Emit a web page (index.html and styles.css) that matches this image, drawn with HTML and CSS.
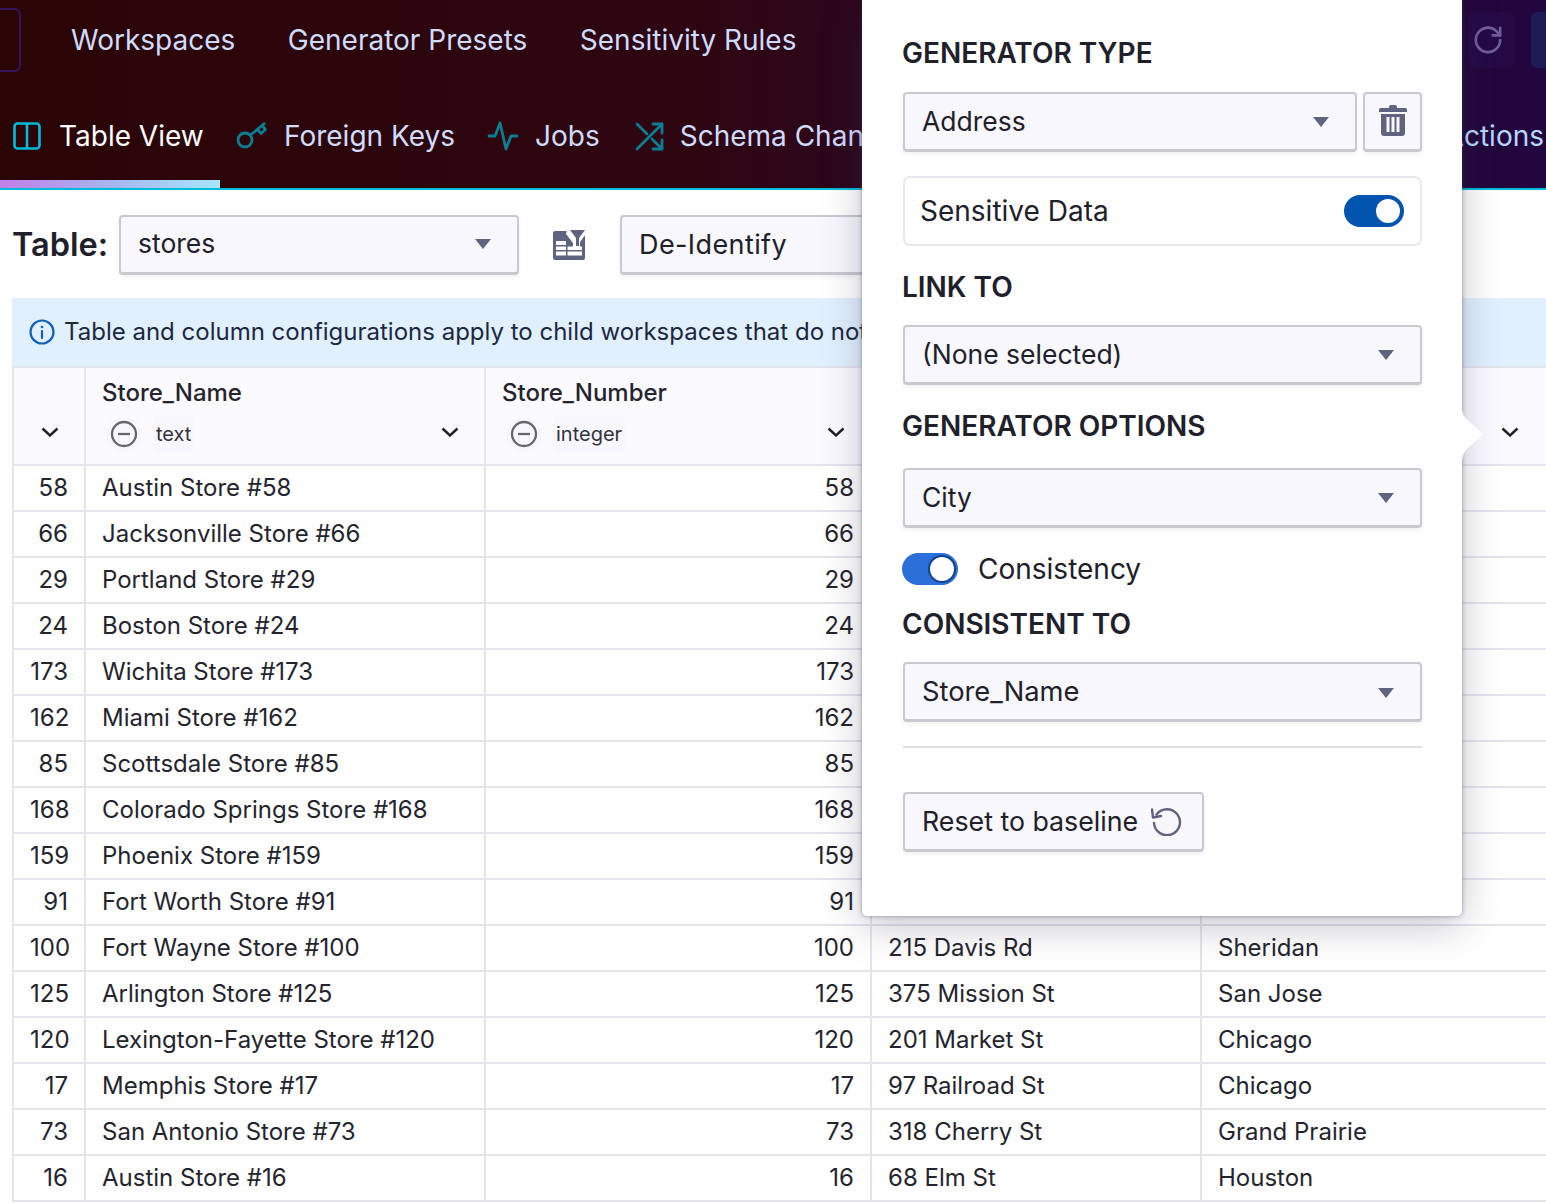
FILE: index.html
```html
<!DOCTYPE html>
<html lang="en">
<head>
<meta charset="utf-8">
<title>Table View</title>
<link rel="stylesheet" href="styles.css">
</head>
<body>
<div class="page">
  <header class="header">
    <div class="topbar">
      <div class="logo-box"></div>
      <nav class="topnav">
        <a>Workspaces</a>
        <a>Generator Presets</a>
        <a>Sensitivity Rules</a>
      </nav>
      <div class="top-actions">
        <span class="icon-btn refresh"><svg width="30" height="30" viewBox="0 0 32 32" fill="none" stroke="#6f5f9f" stroke-width="2.800" stroke-linecap="round" stroke-linejoin="round"><path d="M29 16a13 13 0 1 1-4-9.500L29 11"/><path d="M29 3v8h-8"/></svg></span>
        <span class="icon-btn blue"></span>
      </div>
    </div>
    <div class="tabs">
      <a class="tab active"><svg width="28" height="28" viewBox="0 0 28 28" fill="none" stroke="#00bcd9" stroke-width="2.600"><rect x="1.500" y="1.500" width="25" height="25" rx="3"/><path d="M14 1.500v25"/></svg><span>Table View</span></a>
      <a class="tab"><svg width="32" height="32" viewBox="0 0 32 32" fill="none" stroke="#0a7f94" stroke-width="2.800" stroke-linejoin="round"><circle cx="9" cy="20" r="7"/><path d="M14.500 15 29 3"/><path d="M21 9l4 4.500 4.500-4-4-4.500"/></svg><span>Foreign Keys</span></a>
      <a class="tab"><svg width="32" height="32" viewBox="0 0 32 32" fill="none" stroke="#0a7f94" stroke-width="2.800" stroke-linecap="round" stroke-linejoin="round"><path d="M2 16h6l5-13 6 26 5-13h6"/></svg><span>Jobs</span></a>
      <a class="tab"><svg width="29" height="32" viewBox="0 0 29 32" fill="none" stroke="#0a7f94" stroke-width="2.800" stroke-linecap="round" stroke-linejoin="round"><path d="M2 29 27 4"/><path d="M18 4h9v9"/><path d="M2 4l10 10"/><path d="M17 19l10 10"/><path d="M27 20v9h-9"/></svg><span>Schema Changes</span></a>
    </div>
    <div class="tab-end">Actions</div>
  </header>

  <section class="toolbar">
    <label class="table-label">Table:</label>
    <div class="select table-select"><span>stores</span><i class="caret"></i></div>
    <svg class="filter-icon" width="32" height="30" viewBox="0 0 32 30">
      <rect class="fi-dark" x="0" y="1" width="32" height="29" rx="2"/>
      <path class="fi-light" d="M14 0H33V4L27 12V20H20V13L13 4Z"/>
      <path class="fi-dark" d="M17 0H32L26 8V16H23V8Z"/>
      <path class="fi-light" d="M3 11h10v4H3zM3 16.500h10v3.500H3zM3 21.500h10v4H3zM14.500 16.500H29v3.500H14.500zM14.500 21.500H29v4H14.500z"/>
    </svg>
    <div class="select mode-select"><span>De-Identify</span><i class="caret"></i></div>
  </section>

  <div class="banner">
    <svg width="26" height="26" viewBox="0 0 26 26" fill="none" stroke="#0f62b8" stroke-width="2.200"><circle cx="13" cy="13" r="11.500"/><path d="M13 12v7" stroke-linecap="round"/><circle cx="13" cy="8" r="1.300" fill="#0f62b8" stroke="none"/></svg>
    <span>Table and column configurations apply to child workspaces that do not</span>
  </div>

  <table class="grid">
    <colgroup>
      <col class="c1"><col class="c2"><col class="c3"><col class="c4"><col class="c5">
    </colgroup>
    <thead>
      <tr>
        <th class="idx"><svg class="chev" width="18" height="10" viewBox="0 0 18 10"><path d="M1.500 1.500 9 8.500l7.500-7"/></svg></th>
        <th><div class="col-name">Store_Name</div><div class="col-meta"><span class="minus"><svg width="28" height="28" viewBox="0 0 28 28" fill="none" stroke="#66666f" stroke-width="2.300"><circle cx="14" cy="14" r="12"/><path d="M8 14h12"/></svg></span><span class="type">text</span><svg class="chev push" width="18" height="10" viewBox="0 0 18 10"><path d="M1.500 1.500 9 8.500l7.500-7"/></svg></div></th>
        <th><div class="col-name">Store_Number</div><div class="col-meta"><span class="minus"><svg width="28" height="28" viewBox="0 0 28 28" fill="none" stroke="#66666f" stroke-width="2.300"><circle cx="14" cy="14" r="12"/><path d="M8 14h12"/></svg></span><span class="type">integer</span><svg class="chev push" width="18" height="10" viewBox="0 0 18 10"><path d="M1.500 1.500 9 8.500l7.500-7"/></svg></div></th>
        <th></th>
        <th class="last"><svg class="chev" width="18" height="10" viewBox="0 0 18 10"><path d="M1.500 1.500 9 8.500l7.500-7"/></svg></th>
      </tr>
    </thead>
    <tbody>
      <tr><td class="num idx-cell">58</td><td>Austin Store #58</td><td class="num">58</td><td></td><td></td></tr>
      <tr><td class="num idx-cell">66</td><td>Jacksonville Store #66</td><td class="num">66</td><td></td><td></td></tr>
      <tr><td class="num idx-cell">29</td><td>Portland Store #29</td><td class="num">29</td><td></td><td></td></tr>
      <tr><td class="num idx-cell">24</td><td>Boston Store #24</td><td class="num">24</td><td></td><td></td></tr>
      <tr><td class="num idx-cell">173</td><td>Wichita Store #173</td><td class="num">173</td><td></td><td></td></tr>
      <tr><td class="num idx-cell">162</td><td>Miami Store #162</td><td class="num">162</td><td></td><td></td></tr>
      <tr><td class="num idx-cell">85</td><td>Scottsdale Store #85</td><td class="num">85</td><td></td><td></td></tr>
      <tr><td class="num idx-cell">168</td><td>Colorado Springs Store #168</td><td class="num">168</td><td></td><td></td></tr>
      <tr><td class="num idx-cell">159</td><td>Phoenix Store #159</td><td class="num">159</td><td></td><td></td></tr>
      <tr><td class="num idx-cell">91</td><td>Fort Worth Store #91</td><td class="num">91</td><td></td><td></td></tr>
      <tr><td class="num idx-cell">100</td><td>Fort Wayne Store #100</td><td class="num">100</td><td>215 Davis Rd</td><td>Sheridan</td></tr>
      <tr><td class="num idx-cell">125</td><td>Arlington Store #125</td><td class="num">125</td><td>375 Mission St</td><td>San Jose</td></tr>
      <tr><td class="num idx-cell">120</td><td>Lexington-Fayette Store #120</td><td class="num">120</td><td>201 Market St</td><td>Chicago</td></tr>
      <tr><td class="num idx-cell">17</td><td>Memphis Store #17</td><td class="num">17</td><td>97 Railroad St</td><td>Chicago</td></tr>
      <tr><td class="num idx-cell">73</td><td>San Antonio Store #73</td><td class="num">73</td><td>318 Cherry St</td><td>Grand Prairie</td></tr>
      <tr><td class="num idx-cell">16</td><td>Austin Store #16</td><td class="num">16</td><td>68 Elm St</td><td>Houston</td></tr>
    </tbody>
  </table>

  <aside class="popover">
    <svg class="pointer" width="22" height="50" viewBox="0 0 22 50"><path fill="#fff" d="M0 0C1 6 4 9 9 13C14 17 18 21 21 24C18 28 14 31 9 35C4 39 1 43 0 50Z"/></svg>
    <h3 class="pop-head first">GENERATOR TYPE</h3>
    <div class="row-select">
      <div class="select grow"><span>Address</span><i class="caret"></i></div>
      <button class="trash"><svg width="28" height="32" viewBox="0 0 28 32"><path fill="#5e6480" d="M10 2.500a2 2 0 0 1 2-1.500h4a2 2 0 0 1 2 1.500V4h8.500a1.500 1.500 0 0 1 1.500 1.500V8H0V5.500A1.500 1.500 0 0 1 1.500 4H10z"/><path fill="#5e6480" fill-rule="evenodd" d="M2 10h24v19a3 3 0 0 1-3 3H5a3 3 0 0 1-3-3zM7.500 13v15h3V13zM12.500 13v15h3V13zM17.500 13v15h3V13z"/></svg></button>
    </div>
    <div class="sensitive">
      <span>Sensitive Data</span>
      <span class="toggle dark"><i></i></span>
    </div>
    <h3 class="pop-head link">LINK TO</h3>
    <div class="select wide"><span>(None selected)</span><i class="caret"></i></div>
    <h3 class="pop-head opts">GENERATOR OPTIONS</h3>
    <div class="select wide"><span>City</span><i class="caret"></i></div>
    <div class="consistency">
      <span class="toggle light"><i></i></span>
      <span>Consistency</span>
    </div>
    <h3 class="pop-head cons">CONSISTENT TO</h3>
    <div class="select wide store-name"><span>Store_Name</span><i class="caret"></i></div>
    <hr class="divider">
    <button class="reset"><span>Reset to baseline</span><svg width="32" height="30" viewBox="0 0 32 30" fill="none" stroke="#5e6480" stroke-width="2.400" stroke-linecap="round" stroke-linejoin="round"><path d="M6.500 8.500A13 13 0 1 1 4 17"/><path d="M2 3.500l1 8 8-1.500"/></svg></button>
  </aside>
</div>
</body>
</html>
```

FILE: styles.css
```css
* { box-sizing: border-box; }
html, body { margin: 0; padding: 0; background: #fff; }
body { font-family: Inter, "Noto Sans", sans-serif; color: #20202b; overflow: hidden; }
.page { position: relative; width: 1546px; height: 1204px; overflow: hidden; }

.header {
  position: relative; height: 190px;
  background: linear-gradient(90deg, #2b0505 0%, #2e0612 45%, #2b0625 65%, #22063f 100%);
  border-bottom: 2px solid #00bcd9;
  display: flex; flex-direction: column;
}
.topbar { height: 80px; display: flex; align-items: center; }
.logo-box { width: 21px; height: 64px; margin-top: -1px; border: 2px solid #35145c; border-left: 0; border-radius: 0 7px 7px 0; }
.topnav { display: flex; gap: 52.500px; margin-left: 50px; font-size: 28px; color: #cfdcff; font-weight: 400; }
.top-actions { margin-left: auto; display: flex; gap: 17px; margin-right: -30px; }
.icon-btn { width: 45px; height: 56px; border-radius: 6px; background: #250a45; display: flex; align-items: center; justify-content: center; }
.icon-btn.refresh { padding-right: 8px; }
.icon-btn.blue { background: #1d1a55; }

.tabs { flex: 1; display: flex; align-items: stretch; }
.tab { display: flex; align-items: center; gap: 16px; height: 100%; padding: 4px 18px 0 16px; font-size: 28px; color: #cfdcff; white-space: nowrap; position: relative; }
.tab svg { flex: none; }
.tab.active { color: #fff; width: 220px; padding-left: 13px; gap: 18px; }
.tab.active::after { content: ""; position: absolute; left: 0; right: 0; bottom: 0; height: 8px; background: linear-gradient(90deg, #c17fe8, #a7b4ee 50%, #a5e6fb); }
.tab:nth-child(2) { padding-right: 16px; }
.tab:nth-child(3) { padding-right: 19px; }
.tab-end { position: absolute; right: 2px; top: 119px; font-size: 28px; color: #b6d8ff; }

.toolbar { height: 108px; display: flex; align-items: center; padding: 1px 0 0 12px; }
.table-label { font-size: 32.500px; font-weight: 600; color: #20202b; width: 107px; }
.select {
  display: flex; align-items: center; justify-content: space-between;
  height: 60px; padding: 0 26px 2px 17px; font-size: 26.500px; color: #20202b;
  background: #f7f7fc; border: 2px solid #c9c9d1; border-bottom-width: 3px; border-radius: 4px;
  box-shadow: 0 2px 4px rgba(40, 40, 70, .07);
}
.caret { width: 0; height: 0; border-left: 8px solid transparent; border-right: 8px solid transparent; border-top: 10px solid #5e6480; margin-top: 2px; }
.table-select { width: 400px; }
.filter-icon { margin-left: 34px; flex: none; }
.fi-dark { fill: #5e6480; }
.fi-light { fill: #fff; }
.mode-select { width: 400px; margin-left: 35px; padding-bottom: 0; font-size: 27px; letter-spacing: .4px; }
.store-name { padding-bottom: 0; font-size: 27.300px; }

.banner { margin-left: 12px; height: 68px; background: #e1f0ff; display: flex; align-items: center; gap: 9px; padding: 0 0 1px 17px; font-size: 24px; color: #1c2740; white-space: nowrap; overflow: hidden; }
.banner svg { flex: none; }

.grid { margin-left: 12px; width: 1560px; border-collapse: collapse; table-layout: fixed; font-size: 24px; color: #24242e; }
.c1 { width: 72px; } .c2 { width: 400px; } .c3 { width: 386px; } .c4 { width: 330px; } .c5 { width: 372px; }
.grid th, .grid td { border: 2px solid #e5e5ee; padding: 0 16px; font-weight: 400; white-space: nowrap; }
.grid td { padding-bottom: 2px; }
.grid thead tr { height: 98px; background: #fbfaff; }
.grid tbody tr { height: 46px; }
.grid td.num { text-align: right; padding-right: 16px; }
.grid th { text-align: left; vertical-align: bottom; padding-bottom: 12px; }
.grid th.idx { text-align: center; padding: 0 0 21px 2px; }
.grid th.last { padding-left: 299px; padding-bottom: 21px; }
.grid th .col-name { line-height: 30px; font-weight: 450; }
.col-meta { display: flex; align-items: center; gap: 11px; margin-top: 8px; height: 36px; }
.minus { display: flex; margin-left: 4px; padding: 4px; border-radius: 50%; background: #f8f7fc; }
.type { font-size: 20px; color: #33333d; background: #f8f7fc; border-radius: 5px; padding: 6px 3px; }
.chev { fill: none; stroke: #20202b; stroke-width: 2.400; }
.push { margin-left: auto; margin-right: 9px; margin-top: -4px; }

.popover {
  position: absolute; left: 862px; top: 0; width: 600px; height: 916px;
  background: #fff; border-radius: 0 0 5px 5px; padding: 0 41px;
  display: flex; flex-direction: column;
  box-shadow: 0 0 4px rgba(60, 60, 80, .5), 0 10px 40px rgba(50, 50, 80, .28);
}
.pointer { position: absolute; left: 600px; top: 410px; overflow: visible; }
.pop-head { margin: 0 0 0 -1px; font-size: 28px; line-height: 34px; font-weight: 600; color: #20202b; }
.pop-head.first { margin-top: 36px; margin-bottom: 22px; }
.pop-head.link { margin-top: 24px; margin-bottom: 21px; }
.pop-head.opts { margin-top: 24px; margin-bottom: 25px; }
.pop-head.cons { margin-top: 22px; margin-bottom: 21px; }
.row-select { display: flex; gap: 6px; width: 519px; }
.grow { flex: 1; }
.trash { width: 59px; height: 60px; padding: 0 0 3px; display: flex; align-items: center; justify-content: center; background: #f7f7fc; border: 2px solid #c9c9d1; border-bottom-width: 3px; border-radius: 4px; box-shadow: 0 2px 4px rgba(40, 40, 70, .07); }
.sensitive { margin-top: 24px; width: 519px; height: 70px; border: 2px solid #e9e9f1; border-radius: 7px; display: flex; align-items: center; justify-content: space-between; padding: 0 16px 0 15px; font-size: 28px; color: #20202b; }
.wide { width: 519px; }
.toggle { position: relative; display: block; width: 60px; height: 32px; border-radius: 16px; }
.toggle i { position: absolute; right: 4px; top: 4px; width: 24px; height: 24px; border-radius: 50%; background: #fff; }
.toggle.dark { background: #0054ad; }
.toggle.light { width: 56px; margin-left: -1px; background: #2a70d8; }
.toggle.light i { box-shadow: 0 0 0 2px #12428f; }
.consistency { display: flex; align-items: center; gap: 20px; margin-top: 25px; height: 32px; font-size: 28px; color: #20202b; }
.divider { width: 519px; margin: 24px 0 0; border: 0; border-top: 2px solid #dedee3; }
.reset { align-self: flex-start; margin-top: 44px; width: 301px; height: 60px; display: flex; align-items: center; gap: 12px; padding: 0 0 1px 17px; font-family: inherit; font-size: 26.750px; color: #20202b; background: #f7f7fc; border: 2px solid #c9c9d1; border-bottom-width: 3px; border-radius: 4px; box-shadow: 0 2px 4px rgba(40, 40, 70, .07); }
```
